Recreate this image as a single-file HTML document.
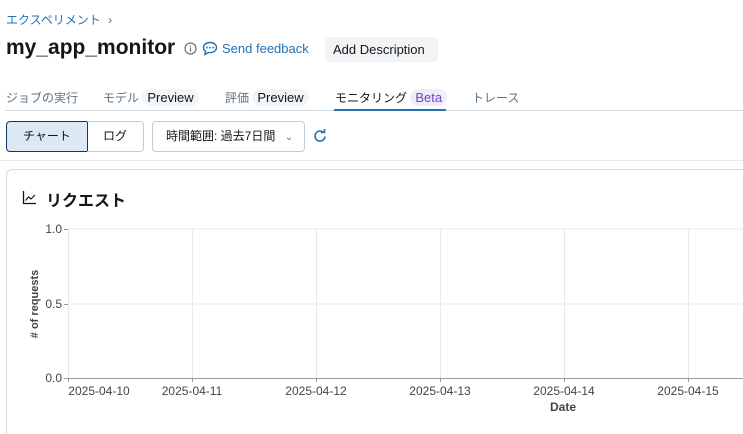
<!DOCTYPE html>
<html><head><meta charset="utf-8"><style>
*{margin:0;padding:0;box-sizing:border-box}
html,body{width:743px;height:434px;overflow:hidden}
body{background:#fff;font-family:"Liberation Sans","Noto Sans CJK JP",sans-serif;color:#11171c;position:relative}
.abs{position:absolute;white-space:nowrap}
</style></head><body>
<div class="abs" style="left:6px;top:11px;font-size:12px;color:#2272b4">エクスペリメント <span style="color:#5f7281;margin-left:4px">›</span></div>
<div class="abs" style="left:6px;top:36px;font-size:21px;font-weight:bold">my_app_monitor</div>
<svg class="abs" style="left:184px;top:42px" width="13" height="13" viewBox="0 0 13 13"><circle cx="6.5" cy="6.5" r="5.5" fill="none" stroke="#5f7281" stroke-width="1.2"/><rect x="5.9" y="5.5" width="1.2" height="4" fill="#5f7281"/><rect x="5.9" y="3.3" width="1.2" height="1.2" fill="#5f7281"/></svg>
<svg class="abs" style="left:202px;top:41px" width="16" height="15" viewBox="0 0 16 15"><path d="M8 1.5C4.2 1.5 1.5 3.7 1.5 6.5c0 1.5.8 2.8 2 3.7L3 13.5l3.5-2c.5.1 1 .1 1.5.1 3.8 0 6.5-2.2 6.5-5.1S11.8 1.5 8 1.5z" fill="none" stroke="#2272b4" stroke-width="1.4"/><circle cx="5" cy="6.6" r=".9" fill="#2272b4"/><circle cx="8" cy="6.6" r=".9" fill="#2272b4"/><circle cx="11" cy="6.6" r=".9" fill="#2272b4"/></svg>
<div class="abs" style="left:222px;top:41px;font-size:13px;color:#2272b4">Send feedback</div>
<div class="abs" style="left:325px;top:37px;width:113px;height:25px;background:#f2f4f6;border-radius:4px;font-size:13px;padding:5px 0 0 8px">Add Description</div>
<div class="abs" style="left:6px;top:89px;font-size:12px;color:#5f7281">ジョブの実行</div>
<div class="abs" style="left:103px;top:89px;font-size:12px;color:#5f7281">モデル <span style="background:#f2f4f6;border-radius:9px;padding:1px 5px;color:#11171c;font-size:13px">Preview</span></div>
<div class="abs" style="left:225px;top:89px;font-size:12px;color:#5f7281">評価 <span style="background:#f2f4f6;border-radius:9px;padding:1px 5px;color:#11171c;font-size:13px">Preview</span></div>
<div class="abs" style="left:335px;top:89px;font-size:12px;color:#11171c">モニタリング <span style="background:#f1ecfb;border-radius:9px;padding:1px 5px;color:#6b45c2;font-size:13px">Beta</span></div>
<div class="abs" style="left:472px;top:89px;font-size:12px;color:#5f7281">トレース</div>
<div class="abs" style="left:5px;top:110px;width:738px;height:1px;background:#d1d9e1"></div>
<div class="abs" style="left:334px;top:109px;width:112px;height:2px;background:#2272b4"></div>
<div class="abs" style="left:6px;top:121px;width:82px;height:31px;background:#dce8f3;border:1px solid #0e3a66;border-radius:4px 0 0 4px;font-size:12px;text-align:center;line-height:29px">チャート</div>
<div class="abs" style="left:87px;top:121px;width:57px;height:31px;border:1px solid #c0cdd8;border-left:none;border-radius:0 4px 4px 0;font-size:12px;text-align:center;line-height:29px">ログ</div>
<div class="abs" style="left:152px;top:121px;width:153px;height:31px;border:1px solid #c0cdd8;border-radius:4px;font-size:12px;line-height:29px;padding-left:13px">時間範囲: 過去7日間 <span style="color:#5f7281;margin-left:6px;font-size:10px">⌄</span></div>
<svg class="abs" style="left:312px;top:128px" width="16" height="16" viewBox="0 0 16 16"><path d="M13 8.5A5 5 0 1 1 11.5 4.5" fill="none" stroke="#2272b4" stroke-width="1.6"/><path d="M9 4.5h3.5V1" fill="none" stroke="#2272b4" stroke-width="1.6"/></svg>
<div class="abs" style="left:0;top:160px;width:743px;height:1px;background:#e6ebf0"></div>
<div class="abs" style="left:6px;top:169px;width:737px;height:265px;border:1px solid #d1d9e1;border-right:none;border-bottom:none;border-radius:6px 0 0 0"></div>
<svg class="abs" style="left:22px;top:190px" width="15" height="15" viewBox="0 0 15 15"><path d="M1.5 1v12.5H14" fill="none" stroke="#11171c" stroke-width="1.3"/><path d="M3.5 10.5l3-3.5 2.5 2 4-4" fill="none" stroke="#11171c" stroke-width="1.2"/></svg>
<div class="abs" style="left:46px;top:187px;font-size:16px;font-weight:bold">リクエスト</div>
<svg class="abs" style="left:0;top:215px" width="743" height="219">
<g stroke="#e8e8e8" stroke-width="1">
<line x1="68" y1="14" x2="743" y2="14"/><line x1="68" y1="89" x2="743" y2="89"/>
<line x1="192.5" y1="14" x2="192.5" y2="163"/><line x1="316.5" y1="14" x2="316.5" y2="163"/><line x1="440.5" y1="14" x2="440.5" y2="163"/><line x1="564.5" y1="14" x2="564.5" y2="163"/><line x1="688.5" y1="14" x2="688.5" y2="163"/>
<line x1="68.5" y1="14" x2="68.5" y2="163"/>
</g>
<g stroke="#999"><line x1="68" y1="163.5" x2="743" y2="163.5"/><line x1="64" y1="14.5" x2="68" y2="14.5"/><line x1="64" y1="89.5" x2="68" y2="89.5"/><line x1="64" y1="163.5" x2="68" y2="163.5"/>
<line x1="68.5" y1="163" x2="68.5" y2="167"/><line x1="192.5" y1="163" x2="192.5" y2="167"/><line x1="316.5" y1="163" x2="316.5" y2="167"/><line x1="440.5" y1="163" x2="440.5" y2="167"/><line x1="564.5" y1="163" x2="564.5" y2="167"/><line x1="688.5" y1="163" x2="688.5" y2="167"/></g>
<g font-family="Liberation Sans,sans-serif" font-size="12" fill="#444">
<text x="62" y="18" text-anchor="end">1.0</text><text x="62" y="93" text-anchor="end">0.5</text><text x="62" y="167" text-anchor="end">0.0</text>
<g text-anchor="middle"><text x="99" y="180">2025-04-10</text><text x="192" y="180">2025-04-11</text><text x="316" y="180">2025-04-12</text><text x="440" y="180">2025-04-13</text><text x="564" y="180">2025-04-14</text><text x="688" y="180">2025-04-15</text></g>
<text x="563" y="196" text-anchor="middle" font-weight="bold">Date</text>
<text transform="translate(38,89) rotate(-90)" text-anchor="middle" font-weight="bold" font-size="11">#  of requests</text>
</g></svg>
</body></html>
